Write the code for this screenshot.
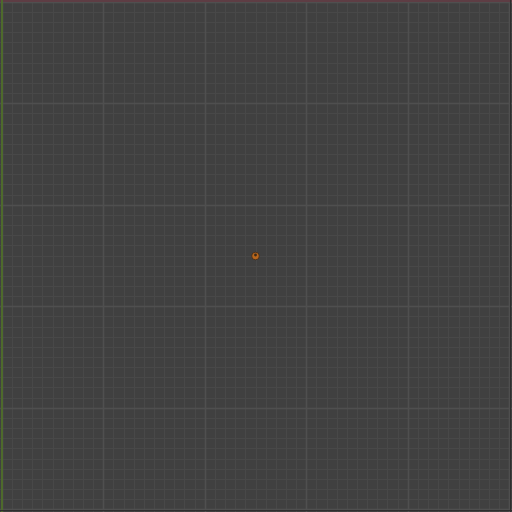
import React from "react";

function Grid() {
  const fine = [];
  const major = [];
  const step = 10.15;
  const c = 255.5;
  for (let i = -30; i <= 30; i++) {
    const p = Math.round(c - 50.75 + i * step) + 0.5;
    if (p < 0 || p > 512) continue;
    if (((i % 10) + 10) % 10 === 0) major.push(p);
    else fine.push(p);
  }
  return (
    <svg width="512" height="512" className="block">
      <rect x="0" y="0" width="512" height="512" fill="#404040" />
      {fine.map((p) => (
        <g key={"f" + p}>
          <line x1={p} y1="0" x2={p} y2="512" stroke="#484848" strokeWidth="1" />
          <line x1="0" y1={p} x2="512" y2={p} stroke="#484848" strokeWidth="1" />
        </g>
      ))}
      {major.map((p) => (
        <g key={"m" + p}>
          <line x1={p} y1="0" x2={p} y2="512" stroke="#4f4f4f" strokeWidth="1.5" />
          <line x1="0" y1={p} x2="512" y2={p} stroke="#4f4f4f" strokeWidth="1.5" />
        </g>
      ))}
      <line x1="0" y1="1" x2="512" y2="1" stroke="#5e3d44" strokeWidth="2" />
      <line x1="2" y1="0" x2="2" y2="512" stroke="#4e6a2c" strokeWidth="2" />
      <line x1="510.5" y1="0" x2="510.5" y2="512" stroke="#2e2e2e" strokeWidth="1" />
      <line x1="0" y1="510.5" x2="512" y2="510.5" stroke="#2e2e2e" strokeWidth="1" />
      <circle cx="255.5" cy="256" r="3.8" fill="#b8661c" stroke="#3a2a1c" strokeWidth="0.8" />
      <circle cx="255.5" cy="255" r="1.4" fill="#3a2a1a" />
    </svg>
  );
}

export default function App() {
  return (
    <div className="w-[512px] h-[512px] overflow-hidden bg-[#404040]">
      <Grid />
    </div>
  );
}
